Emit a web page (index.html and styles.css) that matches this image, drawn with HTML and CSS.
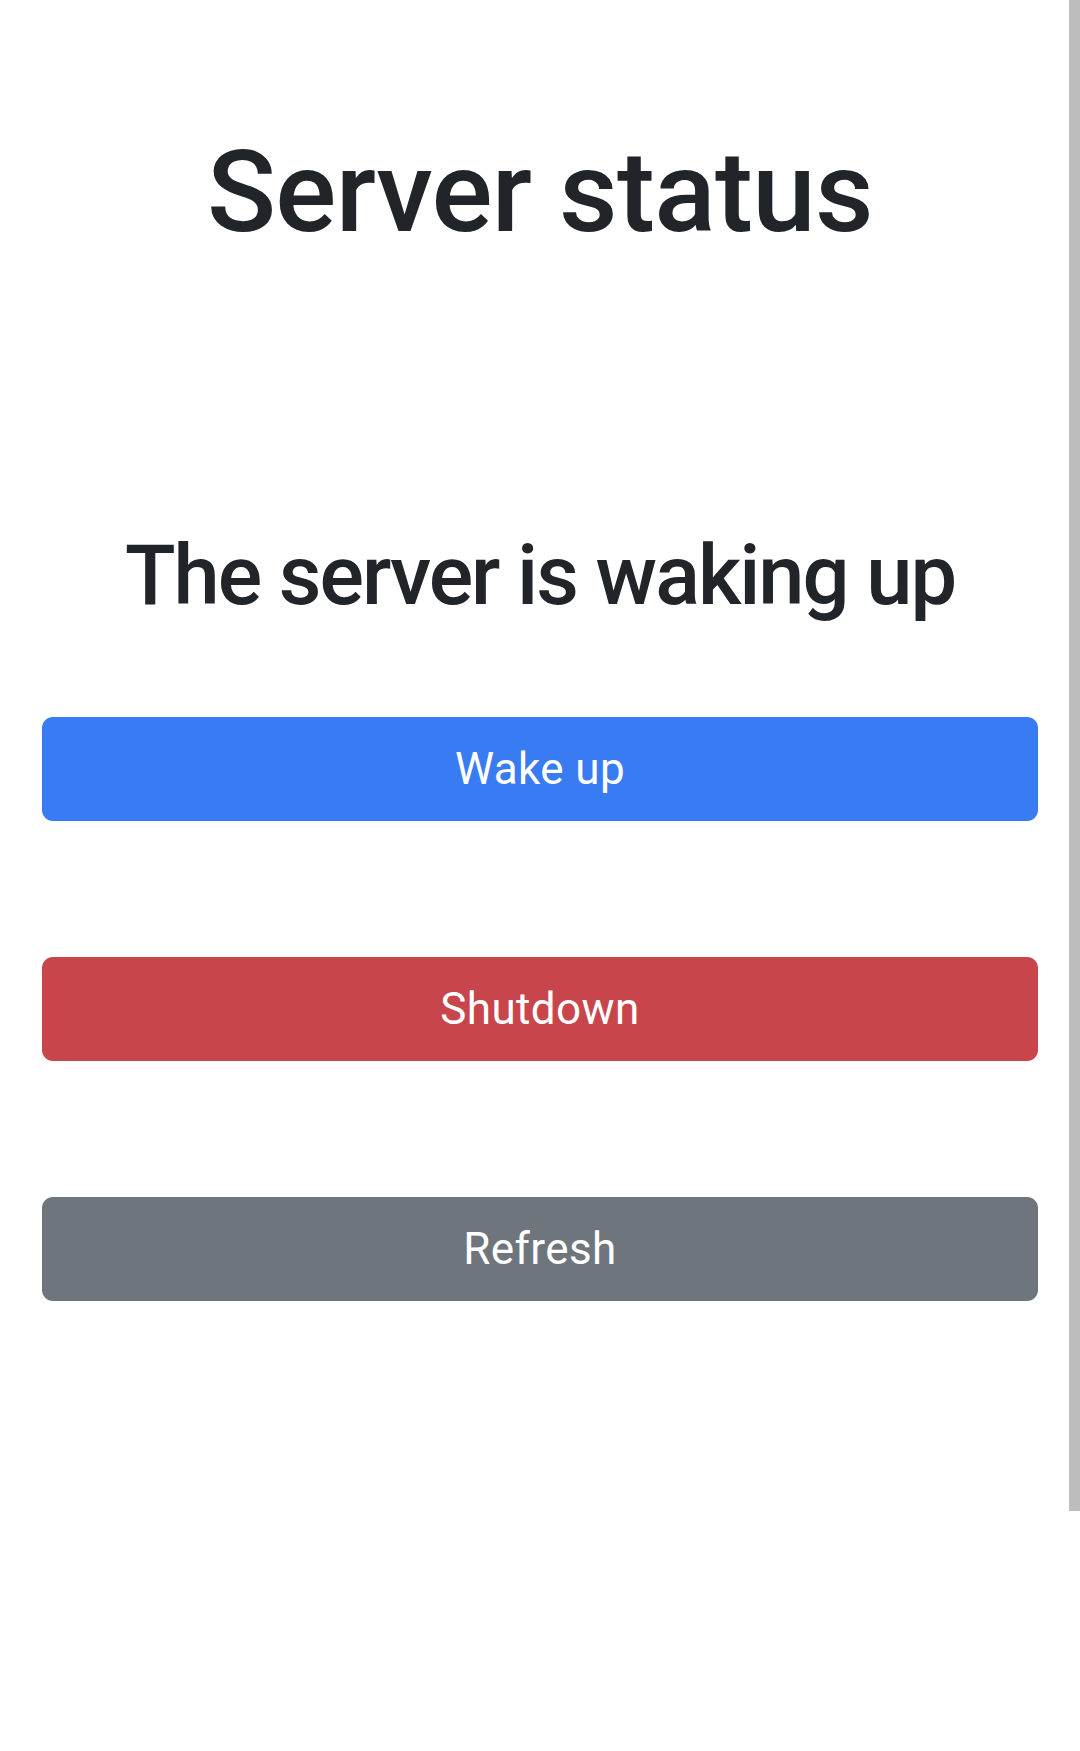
FILE: index.html
```html
<!DOCTYPE html>
<html lang="en">
<head>
<meta charset="utf-8">
<title>Server status</title>
<link rel="stylesheet" href="styles.css">
</head>
<body>
<main class="page">
  <h1 class="title">Server status</h1>
  <h2 class="status">The server is waking up</h2>
  <div class="actions">
    <button class="btn btn-primary" type="button">Wake up</button>
    <button class="btn btn-danger" type="button">Shutdown</button>
    <button class="btn btn-secondary" type="button">Refresh</button>
  </div>
</main>
<div class="scrollbar"></div>
</body>
</html>
```
FILE: styles.css
```css
html, body {
  margin: 0;
  padding: 0;
  background: #ffffff;
}
body {
  font-family: Roboto, "Liberation Sans", Arial, sans-serif;
  color: #212529;
  position: relative;
  min-height: 1751px;
}
.page {
  padding: 124px 42px 0 42px;
  display: flex;
  flex-direction: column;
}
.title {
  margin: 0;
  font-size: 114px;
  font-weight: 500;
  line-height: 1.2;
  letter-spacing: -0.7px;
  text-align: center;
}
.status {
  margin: 265px 0 0;
  font-size: 83px;
  font-weight: 500;
  line-height: 1.2;
  letter-spacing: -2px;
  text-align: center;
}
.actions {
  margin-top: 92px;
  display: flex;
  flex-direction: column;
  gap: 136px;
}
.btn {
  display: block;
  width: 100%;
  border: 0;
  border-radius: 11px;
  padding: 19px 33px;
  font-family: inherit;
  font-size: 44px;
  font-weight: 400;
  line-height: 66px;
  letter-spacing: 0.4px;
  color: #ffffff;
  text-align: center;
}
.btn-primary { background: #387bf3; }
.btn-danger { background: #c8454b; }
.btn-secondary { background: #6f757d; }
.scrollbar {
  position: absolute;
  top: 0;
  right: 0;
  width: 11px;
  height: 1511px;
  background: #bdbdbd;
}
```
